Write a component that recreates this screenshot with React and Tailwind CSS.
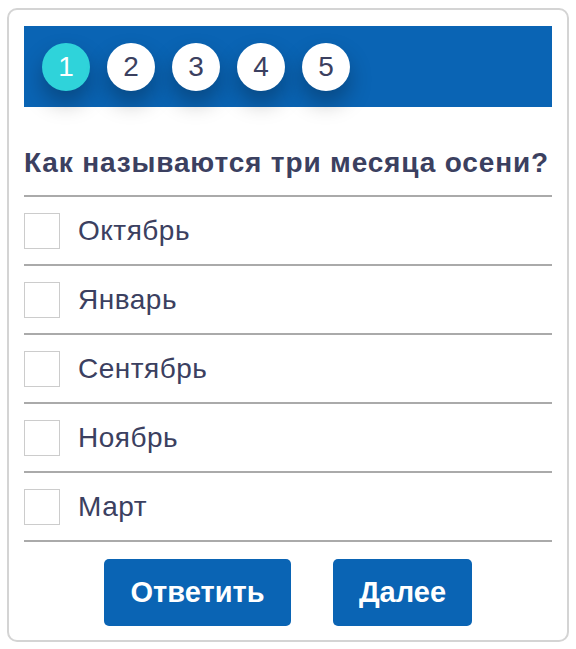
export default function App() {
  const steps = [1, 2, 3, 4, 5];
  const options = ["Октябрь", "Январь", "Сентябрь", "Ноябрь", "Март"];

  return (
    <div
      className="w-[576px] h-[649px] bg-white pl-[7px] pt-[8px]"
      style={{ fontFamily: '"Liberation Sans", Arial, sans-serif' }}
    >
      <div className="w-[562px] h-[634px] border-2 border-[#d4d4d4] rounded-[10px] px-[15px] pt-[16px]">
        {/* steps */}
        <div className="h-[81px] bg-[#0a64b4] flex items-center pl-[18px] gap-[17px]">
          {steps.map((n) => (
            <div
              key={n}
              className={
                n === 1
                  ? "w-12 h-12 rounded-full bg-[#2fd3da] text-white flex items-center justify-center text-[28px] shadow-[0_12px_22px_rgba(0,0,0,0.28)]"
                  : "w-12 h-12 rounded-full bg-white text-[#3b4060] flex items-center justify-center text-[28px] shadow-[0_12px_22px_rgba(0,0,0,0.28)]"
              }
            >
              {n}
            </div>
          ))}
        </div>

        {/* question */}
        <div className="pt-[39px] pb-[15px] border-b-2 border-[#aaaaaa] text-[28px] leading-[34px] font-bold text-[#3b4060] tracking-[0.85px] whitespace-nowrap">
          Как называются три месяца осени?
        </div>

        {options.map((o) => (
          <label
            key={o}
            className="h-[69px] flex items-center gap-[18px] border-b-2 border-[#aaaaaa]"
          >
            <span className="w-[36px] h-[36px] border border-[#cccccc] bg-white shrink-0" />
            <span className="text-[28px] text-[#3b4060] tracking-[0.5px]">{o}</span>
          </label>
        ))}

        <div className="flex justify-center gap-[42px] pt-[17px]">
          <button className="w-[187px] h-[67px] bg-[#0a64b4] rounded-[5px] text-white font-bold text-[29px]">
            Ответить
          </button>
          <button className="w-[139px] h-[67px] bg-[#0a64b4] rounded-[5px] text-white font-bold text-[29px]">
            Далее
          </button>
        </div>
      </div>
    </div>
  );
}
